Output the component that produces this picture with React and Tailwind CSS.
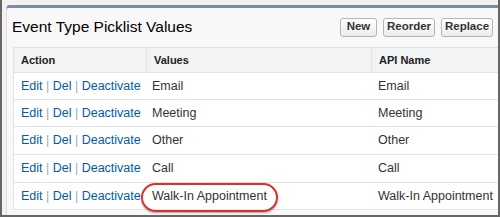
import React from 'react';

const rows = [
  { value: 'Email', api: 'Email', h: 'h-[27px]' },
  { value: 'Meeting', api: 'Meeting', h: 'h-[27px]' },
  { value: 'Other', api: 'Other', h: 'h-[28px]' },
  { value: 'Call', api: 'Call', h: 'h-[28px]' },
  { value: 'Walk-In Appointment', api: 'Walk-In Appointment', h: 'h-[27px]' },
];

const Btn = ({ children, w }) => (
  <button className={`${w} h-[19px] shrink-0 rounded-[3px] border border-[#b5b5b5] bg-gradient-to-b from-white to-[#ececec] text-[11.5px] font-bold text-[#333] leading-none`}>
    {children}
  </button>
);

const App = () => {
  return (
    <div className="relative w-[500px] h-[217px] overflow-hidden border-l-2 border-r-2 border-b-2 border-[#666] bg-[#f2f2f2] pt-[5px] pl-[4px] font-['Liberation_Sans',Arial,sans-serif]">
      <div className="w-[520px] h-full rounded-tl-[4px] border-t-[3px] border-l border-t-[#7d8aa5] border-l-[#dcdcdc] bg-[#f8f8f8]">
        {/* title + buttons */}
        <div className="flex items-center h-[40px] -mt-[1px]">
          <h2 className="w-[333px] shrink-0 pl-[5px] text-[15.5px] text-black">Event Type Picklist Values</h2>
          <div className="flex gap-[6px]">
            <Btn w="w-[37px]">New</Btn>
            <Btn w="w-[52px]">Reorder</Btn>
            <Btn w="w-[52px]">Replace</Btn>
            <div className="w-[20px] h-[19px] shrink-0 rounded-l-[3px] border border-[#b5b5b5] bg-white" />
          </div>
        </div>

        {/* table */}
        <div className="ml-[6px] border-l border-t border-[#e0e3e5] bg-white">
          <div className="flex h-[25px] items-center bg-[#f2f3f3] border-b border-[#e0e3e5] text-[11px] font-bold text-[#222]">
            <div className="w-[132px] pl-[7px]">Action</div>
            <div className="w-[225px] pl-[7px] h-full flex items-center border-l border-[#e0e3e5]">Values</div>
            <div className="flex-1 pl-[7px] h-full flex items-center border-l border-[#e0e3e5]">API Name</div>
          </div>
          {rows.map((r) => (
            <div key={r.value} className={`flex items-center ${r.h} border-b border-[#e3e3e3] text-[12.5px] text-[#333]`}>
              <div className="w-[132px] pl-[7px] text-[#015ba7]">
                Edit <span className="text-[#aaa]">|</span> Del <span className="text-[#aaa]">|</span> Deactivate
              </div>
              <div className="w-[225px] pl-[6px]">{r.value}</div>
              <div className="flex-1 pl-[7px]">{r.api}</div>
            </div>
          ))}
        </div>
      </div>

      {/* red highlight around new value */}
      <div className="absolute left-[139px] top-[183px] w-[137px] h-[29px] rounded-full border-2 border-[#d8322c] shadow-[0_1px_2px_rgba(0,0,0,0.35)]" />
    </div>
  );
};

export default App;
